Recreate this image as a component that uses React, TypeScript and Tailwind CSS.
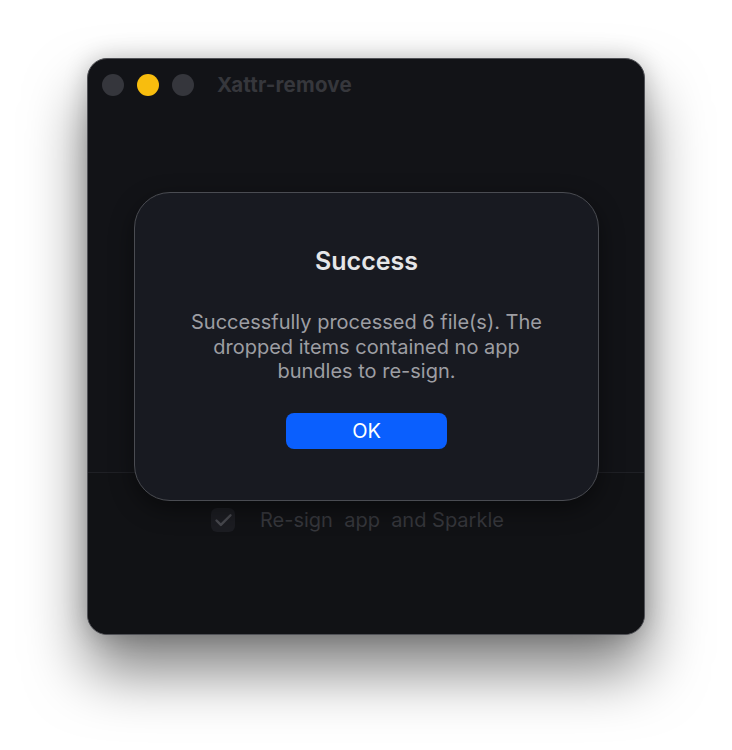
import { Check } from 'lucide-react'

const font = { fontFamily: 'Inter, "Noto Sans", sans-serif' }

function TrafficLights() {
  return (
    <div className="flex items-center gap-[13px]">
      <span className="w-[22px] h-[22px] rounded-full bg-[#35363c]" />
      <span className="w-[22px] h-[22px] rounded-full bg-[#f8bd0e]" />
      <span className="w-[22px] h-[22px] rounded-full bg-[#35363c]" />
    </div>
  )
}

function AlertSheet() {
  return (
    <div className="absolute left-[46px] top-[133px] w-[465px] h-[309px] rounded-[36px] bg-[#181a21] border border-[#4a4c52] shadow-[0_8px_24px_rgba(0,0,0,0.45)] flex flex-col items-center">
      <h2 className="mt-[52px] text-[25px] leading-[32px] font-semibold text-[#e6e6e8]">
        Success
      </h2>
      <p className="mt-[33px] w-[370px] text-center text-[20px] leading-[24.5px] text-[#9d9ea3]">
        Successfully processed 6 file(s). The dropped items contained no app bundles to re-sign.
      </p>
      <button className="mt-[29px] w-[161px] h-[36px] rounded-[8px] bg-[#0a5ffe] text-white text-[20px] leading-none">
        OK
      </button>
    </div>
  )
}

export default function App() {
  return (
    <div className="w-[732px] h-[750px] bg-white pt-[58px] pl-[87px]" style={font}>
      {/* Main window */}
      <div className="relative w-[558px] h-[577px] rounded-[20px] bg-[#121317] border border-[#505156] shadow-[0_36px_60px_rgba(0,0,0,0.5),0_0_24px_rgba(0,0,0,0.2)] flex flex-col overflow-visible">
        <div className="h-[52px] flex items-center pl-[14px] gap-[23px]">
          <TrafficLights />
          <span className="text-[20.5px] font-bold text-[#36373c] tracking-[0.2px]">Xattr-remove</span>
        </div>

        <div className="flex-1" />

        {/* Options strip */}
        <div className="h-[162px] border-t border-[#1f2025] bg-[#111215] rounded-b-[20px] pt-[32px] pl-[123px]">
          <div className="flex items-center gap-[25px]">
            <span className="w-[24px] h-[24px] rounded-[6px] bg-[#1c1d22] flex items-center justify-center">
              <Check className="w-[21px] h-[21px] text-[#48494f]" strokeWidth={2.8} />
            </span>
            <span className="whitespace-pre text-[20px] text-[#36373c]">Re-sign  app  and Sparkle</span>
          </div>
        </div>

        <AlertSheet />
      </div>
    </div>
  )
}
